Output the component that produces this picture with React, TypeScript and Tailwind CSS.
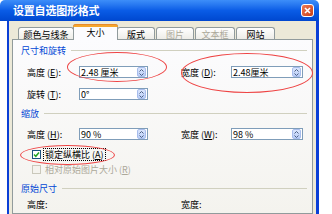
import * as React from 'react'

const FONT = { fontFamily: "'Noto Sans CJK SC', 'Liberation Sans', sans-serif" }

interface TabProps {
    label: string
    selected?: boolean
    disabled?: boolean
    width: string
}

function Tab({ label, selected, disabled, width }: TabProps) {
    if (selected) {
        return (
            <div
                className={`${width} h-[16px] -mx-[2px] relative z-10 flex items-center justify-center bg-[#fcfcfe] border border-b-0 border-[#919b9c] rounded-t-[3px] text-[9px] leading-none text-black`}
            >
                <div className="absolute -top-px -left-px -right-px h-[3px] bg-[#f5a72d] border-t border-[#e68b2c] rounded-t-[3px]" />
                {label}
            </div>
        )
    }
    return (
        <div
            className={`${width} h-[13px] flex items-center justify-center bg-gradient-to-b from-white to-[#ecebe5] border border-b-0 border-[#919b9c] rounded-t-[3px] text-[9px] leading-none ${disabled ? 'text-[#aca899]' : 'text-black'}`}
        >
            {label}
        </div>
    )
}

function Spinner() {
    return (
        <div className="w-[9px] h-[10px] mr-px rounded-[2px] bg-gradient-to-b from-[#dbe6fd] to-[#b9cdf7] border border-[#a8bdec] flex flex-col items-center justify-center gap-px">
            <svg width="5" height="3" viewBox="0 0 5 3">
                <path d="M0.5 2.5 L2.5 0.5 L4.5 2.5" fill="none" stroke="#4d6185" strokeWidth="1" />
            </svg>
            <svg width="5" height="3" viewBox="0 0 5 3">
                <path d="M0.5 0.5 L2.5 2.5 L4.5 0.5" fill="none" stroke="#4d6185" strokeWidth="1" />
            </svg>
        </div>
    )
}

function SpinBox({ value, width }: { value: string; width: string }) {
    return (
        <div className={`${width} h-[12px] bg-white border border-[#7f9db9] flex items-center justify-between`}>
            <span className="pl-[1px] text-[9px] leading-none text-black whitespace-nowrap">{value}</span>
            <Spinner />
        </div>
    )
}

function Label({ text, mnemonic, width }: { text: string; mnemonic?: string; width: string }) {
    return (
        <div className={`${width} text-[9px] leading-none text-black whitespace-nowrap`}>
            {text}
            {mnemonic && (
                <>
                    {' ('}
                    <u>{mnemonic}</u>
                    {'):'}
                </>
            )}
            {!mnemonic && ':'}
        </div>
    )
}

function SectionHeader({ title, className }: { title: string; className?: string }) {
    return (
        <div className={`flex items-center h-[11px] ${className ?? ''}`}>
            <span className="text-[9px] leading-none text-[#0046d5] whitespace-nowrap">{title}</span>
            <div className="flex-1 ml-[5px] mr-[5px] h-px bg-[#d0d0bf]" />
        </div>
    )
}

function FieldRow({
    leftLabel,
    leftKey,
    leftValue,
    rightLabel,
    rightKey,
    rightValue,
    className,
}: {
    leftLabel: string
    leftKey: string
    leftValue: string
    rightLabel?: string
    rightKey?: string
    rightValue?: string
    className?: string
}) {
    return (
        <div className={`flex items-center h-[12px] pl-[6px] ${className ?? ''}`}>
            <Label text={leftLabel} mnemonic={leftKey} width="w-[52px]" />
            <SpinBox value={leftValue} width="w-[69px]" />
            {rightLabel && (
                <>
                    <div className="w-[33px]" />
                    <Label text={rightLabel} mnemonic={rightKey} width="w-[50px]" />
                    <SpinBox value={rightValue ?? ''} width="w-[72px]" />
                </>
            )}
        </div>
    )
}

export default function App() {
    return (
        <div className="w-[332px] h-[214px] bg-white relative overflow-hidden" style={FONT}>
            <div className="w-[319px] h-full flex flex-col">
                {/* Title bar */}
                <div className="h-[21px] flex items-center justify-between rounded-t-[5px] bg-gradient-to-b from-[#3d8ef9] via-[#0a5ce6] to-[#0047cf] pl-[13px] pr-[5px]">
                    <span className="text-[11px] font-bold leading-none text-white tracking-[-0.2px]">设置自选图形格式</span>
                    <div className="w-[13px] h-[13px] rounded-[3px] border border-white bg-gradient-to-br from-[#ec7a55] to-[#c63b12] flex items-center justify-center">
                        <svg width="7" height="7" viewBox="0 0 7 7">
                            <path d="M1 1 L6 6 M6 1 L1 6" stroke="white" strokeWidth="1.6" />
                        </svg>
                    </div>
                </div>

                {/* Body */}
                <div className="flex-1 flex">
                    <div className="w-[7px]" />
                    <div className="flex-1 flex flex-col bg-[#ece9d8] border-l-2 border-r-[3px] border-[#0a3fd6] pt-[3px] pl-[3px] pr-[3px]">
                        {/* Tabs */}
                        <div className="flex items-end h-[16px] pl-[6px] gap-px">
                            <Tab label="颜色与线条" width="w-[56px]" />
                            <Tab label="大小" selected width="w-[45px]" />
                            <Tab label="版式" width="w-[38px]" />
                            <Tab label="图片" disabled width="w-[38px]" />
                            <Tab label="文本框" disabled width="w-[40px]" />
                            <Tab label="网站" width="w-[39px]" />
                        </div>

                        {/* Panel */}
                        <div className="flex-1 -mt-px bg-gradient-to-b from-[#fcfcfe] to-[#f4f3ee] border border-[#919b9c] pt-[5px] pl-[8px]">
                            <SectionHeader title="尺寸和旋转" />
                            <FieldRow
                                className="mt-[10px]"
                                leftLabel="高度"
                                leftKey="E"
                                leftValue="2.48 厘米"
                                rightLabel="宽度"
                                rightKey="D"
                                rightValue="2.48厘米"
                            />
                            <FieldRow className="mt-[10px]" leftLabel="旋转" leftKey="T" leftValue="0°" />

                            <SectionHeader title="缩放" className="mt-[8px]" />
                            <FieldRow
                                className="mt-[9px]"
                                leftLabel="高度"
                                leftKey="H"
                                leftValue="90 %"
                                rightLabel="宽度"
                                rightKey="W"
                                rightValue="98 %"
                            />

                            {/* Checkboxes */}
                            <div className="mt-[9px] h-[10px] pl-[11px] flex items-center gap-[2px]">
                                <div className="w-[9px] h-[9px] bg-white border border-[#1c5180] flex items-center justify-center">
                                    <svg width="7" height="7" viewBox="0 0 7 7">
                                        <path d="M1 3.5 L2.8 5.3 L6 1.5" fill="none" stroke="#21a121" strokeWidth="1.5" />
                                    </svg>
                                </div>
                                <span className="text-[9px] leading-none text-black border border-dotted border-black px-px py-px">
                                    锁定纵横比 (<u>A</u>)
                                </span>
                            </div>
                            <div className="mt-[5px] h-[10px] pl-[11px] flex items-center gap-[2px]">
                                <div className="w-[9px] h-[9px] bg-[#f4f3ee] border border-[#cac8bb]" />
                                <span className="text-[9px] leading-none text-[#aca899] px-[2px]">
                                    相对原始图片大小 (<u>R</u>)
                                </span>
                            </div>

                            <SectionHeader title="原始尺寸" className="mt-[9px]" />
                            <div className="mt-[4px] h-[12px] pl-[6px] flex items-center">
                                <Label text="高度" width="w-[154px]" />
                                <Label text="宽度" width="w-[50px]" />
                            </div>
                        </div>
                    </div>
                </div>
            </div>

            {/* Red annotation ellipses */}
            <div className="absolute left-[67px] top-[52px] w-[100px] h-[30px] rounded-[50%] border border-[#ee4444]" />
            <div className="absolute left-[181px] top-[53px] w-[132px] h-[40px] rounded-[50%] border border-[#ee4444]" />
            <div className="absolute left-[20px] top-[145px] w-[95px] h-[20px] rounded-[50%] border border-[#ee4444]" />
        </div>
    )
}
